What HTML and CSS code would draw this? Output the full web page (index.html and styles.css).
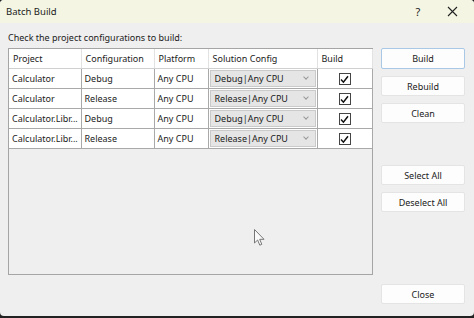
FILE: index.html
```html
<!DOCTYPE html>
<html>
<head>
<meta charset="utf-8">
<link rel="stylesheet" href="styles.css">
</head>
<body>
<div class="window">
  <div class="titlebar">
    <span class="title">Batch Build</span>
    <span class="help">?</span>
    <span class="close-x">
      <svg width="11" height="11" viewBox="0 0 11 11"><path d="M1 1 L10 10 M10 1 L1 10" stroke="#222" stroke-width="1.1" fill="none"/></svg>
    </span>
  </div>
  <div class="content">
    <div class="label">Check the project configurations to build:</div>
    <div class="main">
      <div class="grid">
        <table>
          <colgroup>
            <col class="c-proj"><col class="c-conf"><col class="c-plat"><col class="c-sol"><col class="c-build">
          </colgroup>
          <thead>
            <tr><th>Project</th><th>Configuration</th><th>Platform</th><th>Solution Config</th><th>Build</th></tr>
          </thead>
          <tbody>
            <tr><td>Calculator</td><td>Debug</td><td>Any CPU</td><td class="sol"><div class="combo"><span>Debug|Any CPU</span><i class="chev"></i></div></td><td class="chk"><span class="box"><svg width="9" height="9" viewBox="0 0 9 9"><path d="M1 4.6 L3.4 7.2 L8 1.2" stroke="#111" stroke-width="1.5" fill="none"/></svg></span></td></tr>
            <tr><td>Calculator</td><td>Release</td><td>Any CPU</td><td class="sol"><div class="combo"><span>Release|Any CPU</span><i class="chev"></i></div></td><td class="chk"><span class="box"><svg width="9" height="9" viewBox="0 0 9 9"><path d="M1 4.6 L3.4 7.2 L8 1.2" stroke="#111" stroke-width="1.5" fill="none"/></svg></span></td></tr>
            <tr><td>Calculator.Libr...</td><td>Debug</td><td>Any CPU</td><td class="sol"><div class="combo"><span>Debug|Any CPU</span><i class="chev"></i></div></td><td class="chk"><span class="box"><svg width="9" height="9" viewBox="0 0 9 9"><path d="M1 4.6 L3.4 7.2 L8 1.2" stroke="#111" stroke-width="1.5" fill="none"/></svg></span></td></tr>
            <tr><td>Calculator.Libr...</td><td>Release</td><td>Any CPU</td><td class="sol"><div class="combo"><span>Release|Any CPU</span><i class="chev"></i></div></td><td class="chk"><span class="box"><svg width="9" height="9" viewBox="0 0 9 9"><path d="M1 4.6 L3.4 7.2 L8 1.2" stroke="#111" stroke-width="1.5" fill="none"/></svg></span></td></tr>
          </tbody>
        </table>
      </div>
      <div class="buttons">
        <button class="btn default">Build</button>
        <button class="btn">Rebuild</button>
        <button class="btn">Clean</button>
        <button class="btn sel">Select All</button>
        <button class="btn">Deselect All</button>
        <button class="btn closebtn">Close</button>
      </div>
    </div>
  </div>
  <svg class="cursor" width="12" height="18" viewBox="0 0 12 18"><path d="M0.5 0.5 L0.5 14 L3.6 11 L5.8 16.2 L7.8 15.3 L5.7 10.3 L10 10.3 Z" fill="#fafafa" stroke="#777" stroke-width="1"/></svg>
</div>
</body>
</html>
```
FILE: styles.css
```css
html, body {
  margin: 0;
  padding: 0;
  background: #222;
}
body {
  width: 474px;
  height: 318px;
  overflow: hidden;
  font-family: "Noto Sans", "Open Sans", sans-serif;
  font-size: 9px;
  color: #1b1b1b;
}
.window {
  position: relative;
  width: 474px;
  height: 316px;
  background: #efefef;
  border-radius: 4px;
  overflow: hidden;
  display: flex;
  flex-direction: column;
}
.titlebar {
  height: 23px;
  background: #f4f6e3;
  display: flex;
  align-items: center;
  padding-left: 6px;
  flex: none;
}
.title {
  flex: 1;
  font-size: 9.5px;
}
.help {
  width: 12px;
  text-align: center;
  font-size: 11px;
  margin-right: 23px;
}
.close-x {
  display: flex;
  width: 11px;
  margin-right: 16px;
}
.content {
  flex: 1;
  padding: 8px 9px 12px 8px;
  display: flex;
  flex-direction: column;
}
.label {
  height: 14px;
  line-height: 14px;
  margin-bottom: 3px;
}
.main {
  flex: 1;
  display: flex;
  gap: 8px;
}
.grid {
  width: 363px;
  height: 225px;
  border: 1px solid #a5a5a5;
  background: #efefef;
}
table {
  border-collapse: collapse;
  table-layout: fixed;
  width: 363px;
}
.c-proj { width: 72px; }
.c-conf { width: 73px; }
.c-plat { width: 54px; }
.c-sol { width: 109px; }
.c-build { width: 55px; }
th, td {
  height: 19px;
  padding: 0 0 0 3px;
  text-align: left;
  font-weight: normal;
  white-space: nowrap;
  overflow: hidden;
  background: #fff;
  border-right: 1px solid #a9a9a9;
  border-bottom: 1px solid #a9a9a9;
}
th {
  padding-left: 4px;
  border-right-color: #e2e2e2;
  border-bottom-color: #d0d0d0;
}
td.sol {
  padding: 0 1px;
}
.combo {
  height: 17px;
  box-sizing: border-box;
  background: #e5e5e5;
  border: 1px solid #cacaca;
  display: flex;
  align-items: center;
  padding-left: 4px;
  padding-right: 7px;
}
.combo span { flex: 1; }
.chev {
  width: 3px;
  height: 3px;
  border-right: 1px solid #999;
  border-bottom: 1px solid #999;
  transform: rotate(45deg);
  margin-top: -3px;
}
td.chk {
  padding: 0;
  text-align: center;
}
.box {
  display: inline-flex;
  align-items: center;
  justify-content: center;
  width: 10px;
  height: 10px;
  border: 1px solid #444;
  background: #fff;
  vertical-align: middle;
}
.buttons {
  width: 84px;
  display: flex;
  flex-direction: column;
  gap: 7px;
}
.btn {
  height: 20px;
  box-sizing: border-box;
  padding: 0;
  font-family: inherit;
  font-size: 9px;
  color: #1b1b1b;
  background: #fdfdfd;
  border: 1px solid #e4e4e4;
  border-radius: 2px;
}
.btn.default {
  height: 21px;
  border-color: #a9c8e6;
}
.btn.sel { margin-top: 35px; }
.closebtn { margin-top: auto; }
.cursor {
  position: absolute;
  left: 254px;
  top: 229px;
}
```
